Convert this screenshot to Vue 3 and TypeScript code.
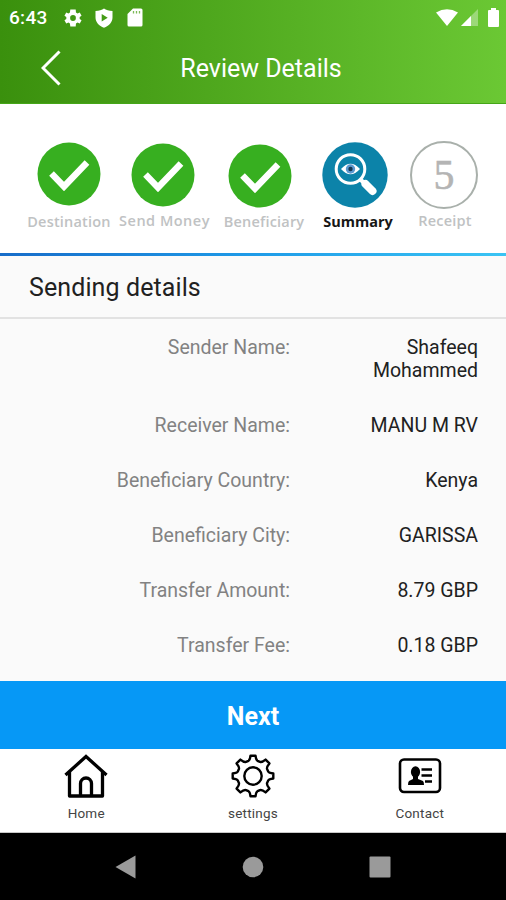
<script setup lang="ts">
interface Step {
  label: string
  kind: 'done' | 'current' | 'todo'
}
interface Detail {
  label: string
  value: string
}

const steps: Step[] = [
  { label: 'Destination', kind: 'done' },
  { label: 'Send Money', kind: 'done' },
  { label: 'Beneficiary', kind: 'done' },
  { label: 'Summary', kind: 'current' },
  { label: 'Receipt', kind: 'todo' },
]

const details: Detail[] = [
  { label: 'Sender Name:', value: 'Shafeeq Mohammed' },
  { label: 'Receiver Name:', value: 'MANU M RV' },
  { label: 'Beneficiary Country:', value: 'Kenya' },
  { label: 'Beneficiary City:', value: 'GARISSA' },
  { label: 'Transfer Amount:', value: '8.79 GBP' },
  { label: 'Transfer Fee:', value: '0.18 GBP' },
]
</script>

<template>
  <div class="screen">
    <header class="top">
      <div class="status">
        <span class="clock">6:43</span>
        <svg class="s-gear" viewBox="2 2 20 20"><path fill="#fff" fill-rule="evenodd" d="M19.4 13a7.500 7.500 0 0 0 0-2l2.100-1.600-2-3.500-2.500 1a7 7 0 0 0-1.700-1L15 2.500H9l-.4 3.400a7 7 0 0 0-1.700 1l-2.400-1-2 3.500L4.600 11a7.500 7.500 0 0 0 0 2l-2.100 1.600 2 3.500 2.400-1a7 7 0 0 0 1.700 1l.4 3.400h6l.3-3.400a7 7 0 0 0 1.700-1l2.500 1 2-3.500zM12 15.200a3.200 3.200 0 1 1 0-6.400 3.200 3.200 0 0 1 0 6.400z" /></svg>
        <svg class="s-shield" viewBox="0 0 18 20"><path fill="#fff" fill-rule="evenodd" d="M9 .5C11 2 14 3 17.500 3v6.500C17.500 14 14 18 9 19.700 4 18 .5 14 .5 9.500V3C4 3 7 2 9 .5zM6.700 6v7.500l6-3.700z" /></svg>
        <svg class="s-card" viewBox="0 0 16 19"><path fill="#fff" d="M6 .5h8q1.500 0 1.500 1.500v15q0 1.500-1.500 1.500H2Q.5 18.500.5 17V6z" /><path stroke="#7dba58" stroke-width="1.300" d="M6.500 3v2.500M9.500 3v2.500M12.500 3v2.500" /></svg>
        <span class="grow"></span>
        <svg class="s-wifi" viewBox="0 0 22 17"><path fill="#fff" d="M0 3.500Q11-3 22 3.500L11 17z" /></svg>
        <svg class="s-cell" viewBox="0 0 17 17"><path fill="#fff" opacity=".35" d="M17 0v17H0z" /><path fill="#fff" d="M10 7v10H0z" /></svg>
        <svg class="s-batt" viewBox="0 0 11 19"><path fill="#fff" d="M3 0h5v2h2q1 0 1 1v15q0 1-1 1H1q-1 0-1-1V3q0-1 1-1h2z" /></svg>
      </div>
      <div class="bar">
        <svg class="back" viewBox="0 0 20 36"><path d="M18.500 1.500 2 18l16.500 16.500" fill="none" stroke="#fff" stroke-width="3" /></svg>
        <h1>Review Details</h1>
      </div>
    </header>

    <nav class="steps">
      <div v-for="s in steps" :key="s.label" class="step" :class="s.kind">
        <svg v-if="s.kind === 'done'" viewBox="0 0 64 64"><circle cx="32" cy="32" r="31.500" fill="#37af20" /><path d="m14.500 31.500 12.500 13L50 20.500" fill="none" stroke="#fff" stroke-width="6.500" /></svg>
        <svg v-else-if="s.kind === 'current'" viewBox="0 0 66 66">
          <circle cx="33" cy="33" r="32.700" fill="#0c83a9" />
          <path d="M43.500 42 50.500 49" stroke="#fff" stroke-width="8" stroke-linecap="round" />
          <path d="m37 36 6 6" stroke="#fff" stroke-width="4" />
          <circle cx="28.500" cy="27" r="14.300" fill="#0c83a9" stroke="#fff" stroke-width="3" />
          <path d="M19 27q9.500-10.500 19 0-9.500 10.500-19 0z" fill="#fff" />
          <circle cx="28.500" cy="27" r="4.700" fill="#5b98cf" />
          <circle cx="28.500" cy="27" r="2.200" fill="#15364e" />
        </svg>
        <span v-else class="ring">5</span>
        <span class="label">{{ s.label }}</span>
      </div>
    </nav>
    <div class="progress"></div>

    <h2>Sending details</h2>
    <dl>
      <div v-for="d in details" :key="d.label" class="row">
        <dt>{{ d.label }}</dt>
        <dd>{{ d.value }}</dd>
      </div>
    </dl>

    <button class="next">Next</button>

    <nav class="tabs">
      <div class="tab">
        <svg viewBox="0 0 44 44" fill="none" stroke="#000" stroke-width="3.300"><path d="M1.500 21 22 2.500 42.500 21" /><path d="M5.500 18v24h33V18" stroke-linejoin="round" /><path d="M16.500 42V29.500a5.500 5.500 0 0 1 11 0V42" /></svg>
        <span>Home</span>
      </div>
      <div class="tab">
        <svg viewBox="0 0 44 44" fill="none" stroke="#000" stroke-width="2.400" stroke-linejoin="round"><circle cx="22" cy="22" r="8.700" /><path d="M19.500 1.700h5Q25 6 26.500 6.800L29 7.900Q31 8.600 34.600 5.600L38.400 9.400Q35.400 13 36.100 15L37.200 17.500Q38 19 42.300 19.500v5Q38 25 37.200 26.500L36.100 29Q35.400 31 38.400 34.600L34.600 38.400Q31 35.400 29 36.100L26.500 37.200Q25 38 24.500 42.300h-5Q19 38 17.500 37.200L15 36.100Q13 35.400 9.400 38.400L5.600 34.600Q8.600 31 7.900 29L6.800 26.500Q6 25 1.700 24.500v-5Q6 19 6.800 17.500L7.900 15Q8.600 13 5.600 9.400L9.400 5.600Q13 8.600 15 7.900L17.500 6.800Q19 6 19.500 1.700z" /></svg>
        <span>settings</span>
      </div>
      <div class="tab">
        <svg viewBox="0 0 44 44"><rect x="2" y="5.500" width="40" height="32.500" rx="4" fill="none" stroke="#000" stroke-width="2.600" /><ellipse cx="17.500" cy="18" rx="4.600" ry="5.700" /><path d="M15 21h5v4l5 2q1 1 1 4H10q0-3 1-4l4-2z" /><path d="M23.500 15.500H34M23.500 21.500H34M27 27.500h7" stroke="#000" stroke-width="2.400" /></svg>
        <span>Contact</span>
      </div>
    </nav>

    <footer class="system">
      <svg viewBox="0 0 22 24"><path d="M20.500.5v23L.5 12z" fill="#9a9a9a" /></svg>
      <svg viewBox="0 0 22 24"><circle cx="11" cy="12" r="10.300" fill="#9a9a9a" /></svg>
      <svg viewBox="0 0 22 24"><rect x=".5" y="1.500" width="21" height="21" rx="1" fill="#9a9a9a" /></svg>
    </footer>
  </div>
</template>

<style>
body {
  margin: 0;
}
</style>

<style scoped>
.screen {
  width: 506px;
  height: 900px;
  overflow: hidden;
  display: flex;
  flex-direction: column;
  background: #fafafa;
  font-family: Roboto, sans-serif;
  color: #212121;
}
svg {
  display: block;
  flex: none;
}
.top {
  height: 104px;
  box-sizing: border-box;
  flex: none;
  color: #fff;
  background: linear-gradient(90deg, #3a900d, #6bc834);
  border-bottom: 1px solid #45a618;
}
.status {
  display: flex;
  align-items: center;
  height: 35px;
  padding: 0 7px 0 9px;
}
.clock {
  font-size: 19px;
  font-weight: 500;
  width: 55px;
  letter-spacing: 0.3px;
}
.s-gear { width: 18px; height: 18px; }
.s-shield { width: 18px; height: 20px; margin-left: 13px; }
.s-card { width: 16px; height: 19px; margin-left: 14px; }
.grow { flex: 1; }
.s-wifi { width: 22px; height: 17px; }
.s-cell { width: 17px; height: 17px; margin: 0 10px 0 3px; }
.s-batt { width: 11px; height: 19px; }
.bar {
  display: grid;
  grid-template-columns: 64px 1fr 48px;
  align-items: center;
  height: 66px;
}
.back {
  width: 20px;
  height: 36px;
  margin-left: 41px;
}
h1 {
  margin: 0;
  text-align: center;
  font-size: 25px;
  font-weight: 400;
}
.steps {
  display: grid;
  grid-template-columns: 94px 97px 102px 86px 88px;
  height: 149px;
  flex: none;
  box-sizing: border-box;
  padding: 37px 0 0 22px;
  background: #fff;
}
.step {
  display: grid;
  grid-template-rows: 69px 20px;
  align-items: center;
  justify-items: center;
  height: 89px;
}
.step svg {
  width: 64px;
  height: 64px;
}
.step.current svg {
  width: 66px;
  height: 66px;
  margin: 0 6px 1px 0;
}
.step:nth-child(1) svg { margin-bottom: 3px; }
.step:nth-child(2) svg { margin: 0 4px 1px 0; }
.step:nth-child(3) svg { margin-right: 8px; }
.label {
  font: 600 14.500px/20px "Open Sans", sans-serif;
  letter-spacing: 0.2px;
  color: #c0c2c3;
  margin-top: 3px;
  white-space: nowrap;
}
.current .label {
  color: #161616;
  font-weight: 700;
  letter-spacing: 0;
}
.todo .label,
.step:nth-child(2) .label {
  margin-top: 1px;
}
.step:nth-child(2) .label {
  letter-spacing: 0.5px;
}
.ring {
  width: 68px;
  height: 68px;
  box-sizing: border-box;
  border: 2px solid #a9b0ab;
  border-radius: 50%;
  display: grid;
  place-items: center;
  margin: 0 2px 1px 0;
  font: 42px/64px "Liberation Serif", serif;
  color: #b4b4b4;
  -webkit-text-stroke: 0.5px #b4b4b4;
}
.progress {
  height: 3px;
  flex: none;
  background: linear-gradient(90deg, #176cc9, #1e9be8 50%, #3ac4f4);
}
h2 {
  margin: 0;
  height: 63px;
  flex: none;
  box-sizing: border-box;
  padding-left: 29px;
  border-bottom: 2px solid #e2e2e2;
  font-size: 25px;
  line-height: 64px;
  font-weight: 400;
  letter-spacing: 0.1px;
}
dl {
  margin: 0;
  padding-top: 1px;
  box-sizing: border-box;
  height: 362px;
  flex: none;
}
.row {
  display: grid;
  grid-template-columns: 290px 1fr;
  column-gap: 58px;
  padding: 16px 28px 16px 0;
  font-size: 19.500px;
  line-height: 23px;
  text-align: right;
}
dt {
  color: #828282;
}
dd {
  margin: 0;
}
.next {
  height: 68px;
  flex: none;
  border: 0;
  padding: 3px 0 0;
  background: #0698f6;
  color: #fff;
  font: 700 25px/65px Roboto, sans-serif;
}
.tabs {
  display: grid;
  grid-template-columns: repeat(3, 166.800px);
  justify-content: center;
  height: 84px;
  flex: none;
  box-sizing: border-box;
  background: #fff;
  border-bottom: 1px solid #c8c8c8;
}
.tab {
  display: flex;
  flex-direction: column;
  align-items: center;
  padding-top: 5px;
  font-size: 13.500px;
  line-height: 20px;
  letter-spacing: 0.2px;
  color: #444;
}
.tab svg {
  width: 44px;
  height: 44px;
}
.tab span {
  margin-top: 5px;
}
.system {
  display: flex;
  align-items: center;
  justify-content: center;
  gap: 105px;
  flex: 1;
  background: #000;
}
.system svg {
  width: 22px;
  height: 24px;
}
</style>
